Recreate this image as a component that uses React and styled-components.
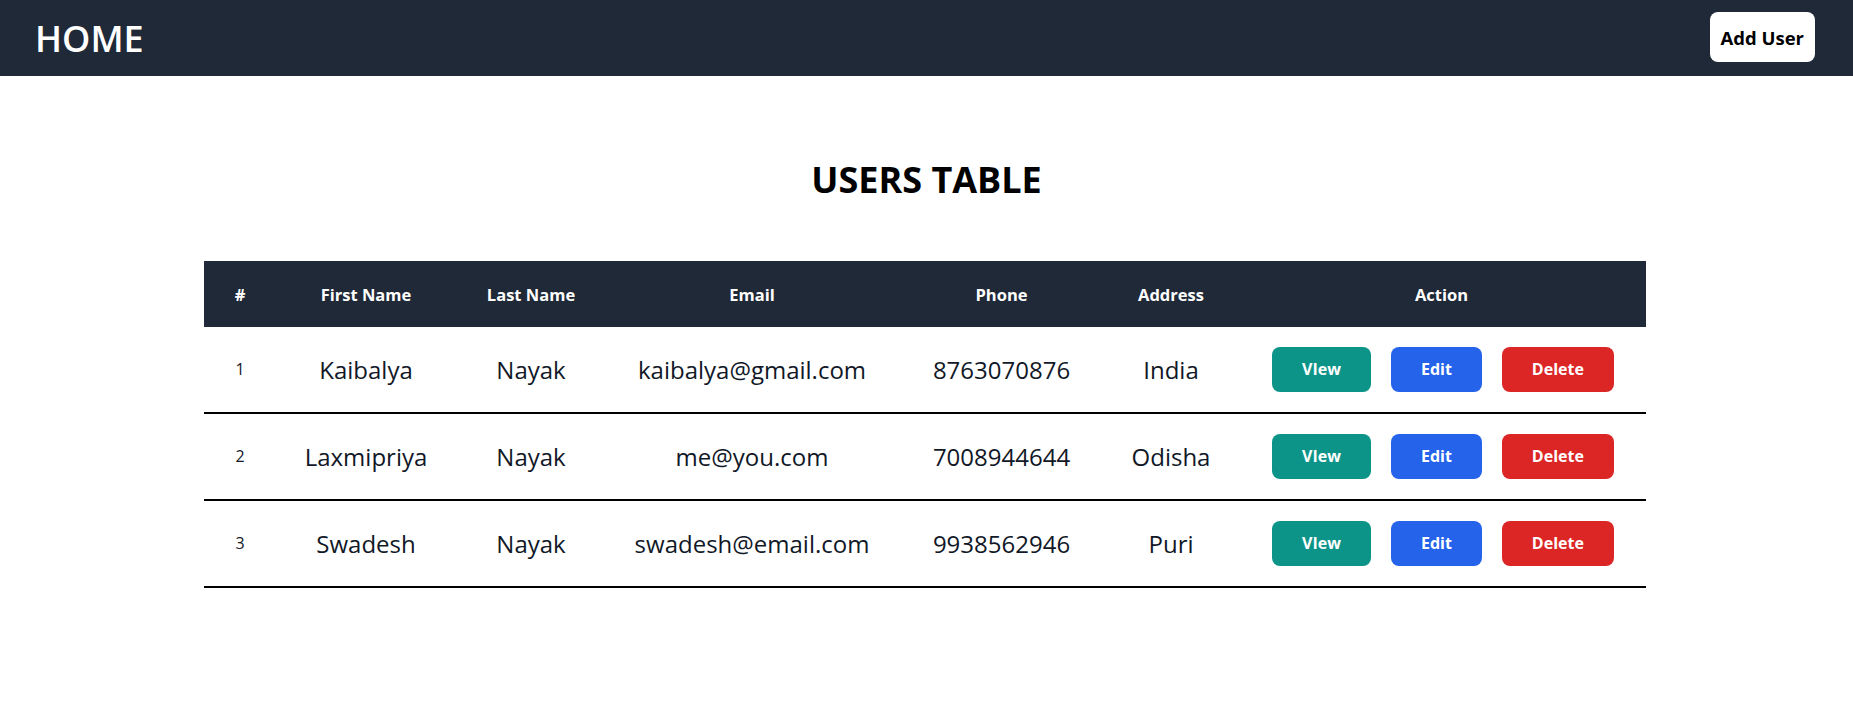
import React from 'react';
import styled, { createGlobalStyle } from 'styled-components';

const GlobalStyle = createGlobalStyle`
  body {
    margin: 0;
    background: #ffffff;
    font-family: 'Open Sans', 'Noto Sans', sans-serif;
  }
`;

const NavBar = styled.header`
  height: 76px;
  background: #1f2937;
  display: flex;
  align-items: center;
  justify-content: space-between;
  padding: 0 38px 0 35px;
`;

const Brand = styled.h1`
  margin: 0;
  color: #ffffff;
  font-size: 36px;
  font-weight: 600;
`;

const AddButton = styled.button`
  height: 50px;
  padding: 0 11px;
  margin-top: -2px;
  border: none;
  border-radius: 8px;
  background: #ffffff;
  color: #000000;
  font-family: inherit;
  font-size: 18.5px;
  font-weight: 700;
  cursor: pointer;
`;

const Main = styled.main`
  padding-top: 79px;
  display: flex;
  flex-direction: column;
  align-items: center;
`;

const Title = styled.h2`
  margin: 0 0 57px;
  font-size: 36px;
  font-weight: 700;
  color: #000000;
`;

const Table = styled.table`
  width: 1442px;
  table-layout: fixed;
  border-collapse: separate;
  border-spacing: 0;
  margin-right: 3px;
`;

const HeadCell = styled.th`
  height: 66px;
  padding: 0;
  background: #1f2937;
  color: #ffffff;
  font-size: 16.5px;
  font-weight: 700;
  text-align: center;
`;

const Cell = styled.td`
  box-sizing: border-box;
  height: 87px;
  padding: 0 0 1px;
  border-bottom: 2px solid #000000;
  text-align: center;
  vertical-align: middle;
  color: #111827;
  font-weight: 500;
  font-size: ${(p) => (p.small ? '16px' : '24px')};
`;

const Actions = styled.div`
  display: flex;
  justify-content: center;
  gap: 20px;
  padding-left: 3px;
`;

const ActionButton = styled.button`
  height: 45px;
  padding: 0 30px;
  border: none;
  border-radius: 8px;
  background: ${(p) => p.color};
  color: #ffffff;
  font-family: inherit;
  font-size: 16px;
  font-weight: 700;
  cursor: pointer;
`;

const columns = [
  { label: '#', width: 72 },
  { label: 'First Name', width: 180 },
  { label: 'Last Name', width: 150 },
  { label: 'Email', width: 292 },
  { label: 'Phone', width: 207 },
  { label: 'Address', width: 132 },
  { label: 'Action', width: 409 },
];

const users = [
  { id: 1, first: 'Kaibalya', last: 'Nayak', email: 'kaibalya@gmail.com', phone: '8763070876', address: 'India' },
  { id: 2, first: 'Laxmipriya', last: 'Nayak', email: 'me@you.com', phone: '7008944644', address: 'Odisha' },
  { id: 3, first: 'Swadesh', last: 'Nayak', email: 'swadesh@email.com', phone: '9938562946', address: 'Puri' },
];

const App = () => {
  return (
    <>
      <GlobalStyle />
      <NavBar>
        <Brand>HOME</Brand>
        <AddButton>Add User</AddButton>
      </NavBar>
      <Main>
        <Title>USERS TABLE</Title>
        <Table>
          <colgroup>
            {columns.map((c) => (
              <col key={c.label} style={{ width: c.width }} />
            ))}
          </colgroup>
          <thead>
            <tr>
              {columns.map((c) => (
                <HeadCell key={c.label}>{c.label}</HeadCell>
              ))}
            </tr>
          </thead>
          <tbody>
            {users.map((u) => (
              <tr key={u.id}>
                <Cell small>{u.id}</Cell>
                <Cell>{u.first}</Cell>
                <Cell>{u.last}</Cell>
                <Cell>{u.email}</Cell>
                <Cell>{u.phone}</Cell>
                <Cell>{u.address}</Cell>
                <Cell>
                  <Actions>
                    <ActionButton color='#0d9488'>VIew</ActionButton>
                    <ActionButton color='#2563eb'>Edit</ActionButton>
                    <ActionButton color='#dc2626'>Delete</ActionButton>
                  </Actions>
                </Cell>
              </tr>
            ))}
          </tbody>
        </Table>
      </Main>
    </>
  );
};

export default App;
